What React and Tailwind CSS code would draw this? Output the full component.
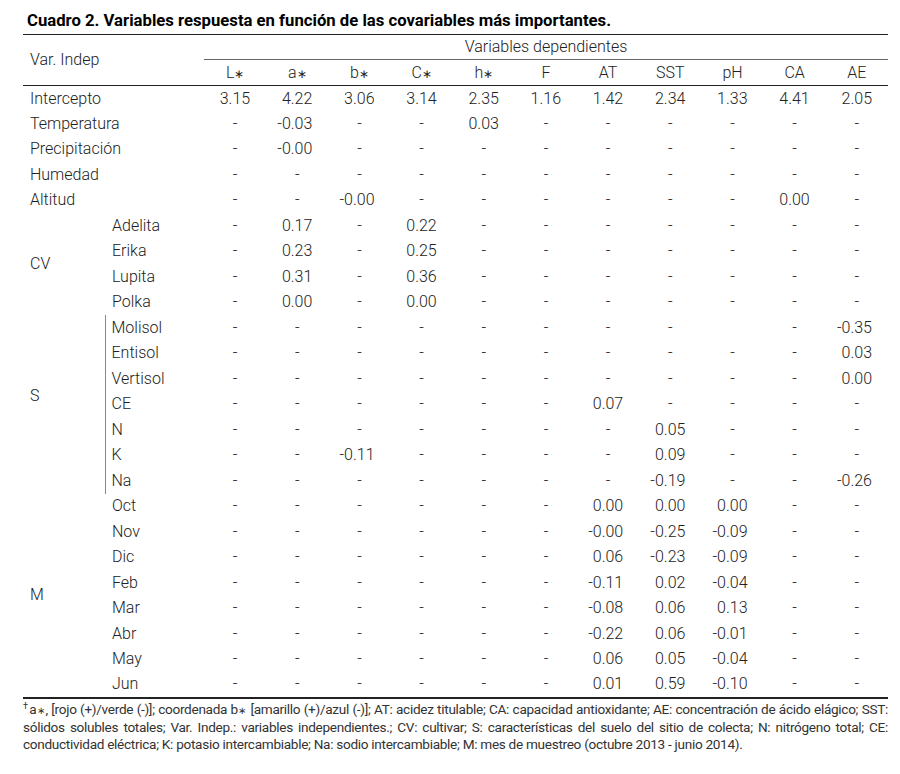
const star = <span className="text-[0.75em]">∗</span>;
const noteStar = <span className="text-[10px] tracking-normal px-[0.5px]">∗</span>;
const cols = [
  <>L{star}</>,
  <>a{star}</>,
  <>b{star}</>,
  <>C{star}</>,
  <>h{star}</>,
  "F",
  "AT",
  "SST",
  "pH",
  "CA",
  "AE",
];

const d = "-";
const none = Array(11).fill(d);
const at = (vals) => {
  const r = [...none];
  Object.entries(vals).forEach(([k, v]) => (r[k] = v));
  return r;
};

const groups = [
  { rows: [
    { label: "Intercepto", vals: ["3.15", "4.22", "3.06", "3.14", "2.35", "1.16", "1.42", "2.34", "1.33", "4.41", "2.05"] },
  ] },
  { rows: [{ label: "Temperatura", vals: at({ 1: "-0.03", 4: "0.03" }) }] },
  { rows: [{ label: "Precipitación", vals: at({ 1: "-0.00" }) }] },
  { rows: [{ label: "Humedad", vals: none }] },
  { rows: [{ label: "Altitud", vals: at({ 2: "-0.00", 9: "0.00" }) }] },
  {
    name: "CV",
    rows: [
      { label: "Adelita", vals: at({ 1: "0.17", 3: "0.22" }) },
      { label: "Erika", vals: at({ 1: "0.23", 3: "0.25" }) },
      { label: "Lupita", vals: at({ 1: "0.31", 3: "0.36" }) },
      { label: "Polka", vals: at({ 1: "0.00", 3: "0.00" }) },
    ],
  },
  {
    name: "S",
    bar: true,
    rows: [
      { label: "Molisol", vals: at({ 8: "", 10: "-0.35" }) },
      { label: "Entisol", vals: at({ 10: "0.03" }) },
      { label: "Vertisol", vals: at({ 10: "0.00" }) },
      { label: "CE", vals: at({ 6: "0.07" }) },
      { label: "N", vals: at({ 7: "0.05" }) },
      { label: "K", vals: at({ 2: "-0.11", 7: "0.09" }) },
      { label: "Na", vals: at({ 7: "-0.19", 10: "-0.26" }) },
    ],
  },
  {
    name: "M",
    rows: [
      { label: "Oct", vals: at({ 6: "0.00", 7: "0.00", 8: "0.00" }) },
      { label: "Nov", vals: at({ 6: "-0.00", 7: "-0.25", 8: "-0.09" }) },
      { label: "Dic", vals: at({ 6: "0.06", 7: "-0.23", 8: "-0.09" }) },
      { label: "Feb", vals: at({ 6: "-0.11", 7: "0.02", 8: "-0.04" }) },
      { label: "Mar", vals: at({ 6: "-0.08", 7: "0.06", 8: "0.13" }) },
      { label: "Abr", vals: at({ 6: "-0.22", 7: "0.06", 8: "-0.01" }) },
      { label: "May", vals: at({ 6: "0.06", 7: "0.05", 8: "-0.04" }) },
      { label: "Jun", vals: at({ 6: "0.01", 7: "0.59", 8: "-0.10" }) },
    ],
  },
];

function Cell({ v }) {
  if (v === d || v === "") {
    return <td className="text-center p-0">{v}</td>;
  }
  return <td className="text-right p-0 pr-[16px]">{v}</td>;
}

export default function App() {
  return (
    <div className="bg-white min-h-screen text-[#222] font-['Roboto',sans-serif]">
      <div className="ml-[23px] w-[865px] pt-[10px]">
        <h1 className="pl-[4px] text-[16.7px] font-bold text-black leading-[21px] pb-[3px]">
          Cuadro 2. Variables respuesta en función de las covariables más importantes.
        </h1>

        <table className="w-full table-fixed border-collapse text-[16px] font-light">
          <colgroup>
            <col className="w-[82px]" />
            <col className="w-[99px]" />
            {cols.map((c, i) => (
              <col key={i} />
            ))}
          </colgroup>
          <thead>
            <tr className="h-[25px] border-t-[1.5px] border-[#222]">
              <th rowSpan={2} colSpan={2} className="text-left font-light pl-[7px] p-0 align-middle">
                Var. Indep
              </th>
              <th colSpan={11} className="font-light p-0 border-b border-[#666] text-center">
                Variables dependientes
              </th>
            </tr>
            <tr className="h-[26px] border-b-[1.5px] border-[#222]">
              {cols.map((c, i) => (
                <th key={i} className="font-light p-0 text-center">
                  {c}
                </th>
              ))}
            </tr>
          </thead>
          <tbody>
            {groups.map((g, gi) =>
              g.rows.map((r, ri) => (
                <tr
                  key={gi + "-" + ri}
                  className={
                    gi === groups.length - 1 && ri === g.rows.length - 1
                      ? "h-[25.5px] border-b-2 border-[#222]"
                      : "h-[25.5px]"
                  }
                >
                  {!g.name && (
                    <td colSpan={2} className="p-0 pl-[7px]">
                      {r.label}
                    </td>
                  )}
                  {g.name && ri === 0 && (
                    <td rowSpan={g.rows.length} className="p-0 pl-[7px] align-middle">
                      <span className={g.name === "S" ? "relative top-[-8px]" : ""}>{g.name}</span>
                    </td>
                  )}
                  {g.name && (
                    <td className={g.bar ? "p-0 pl-[6px] border-l border-[#888]" : "p-0 pl-[7px]"}>
                      {r.label}
                    </td>
                  )}
                  {r.vals.map((v, vi) => (
                    <Cell key={vi} v={v} />
                  ))}
                </tr>
              ))
            )}
          </tbody>
        </table>

        <p className="text-[13.6px] tracking-[-0.3px] leading-[17px] text-[#333] text-justify pt-[2px]">
          <span className="text-[9px] tracking-normal pr-[1px] align-top leading-[10px]">†</span>a{noteStar}, [rojo
          (+)/verde (-)]; coordenada b{noteStar} [amarillo (+)/azul (-)]; AT: acidez titulable; CA: capacidad
          antioxidante; AE: concentración de ácido elágico; SST: sólidos solubles totales; Var. Indep.: variables
          independientes.; CV: cultivar; S: características del suelo del sitio de colecta; N: nitrógeno total; CE:
          conductividad eléctrica; K: potasio intercambiable; Na: sodio intercambiable; M: mes de muestreo (octubre
          2013 - junio 2014).
        </p>
      </div>
    </div>
  );
}
